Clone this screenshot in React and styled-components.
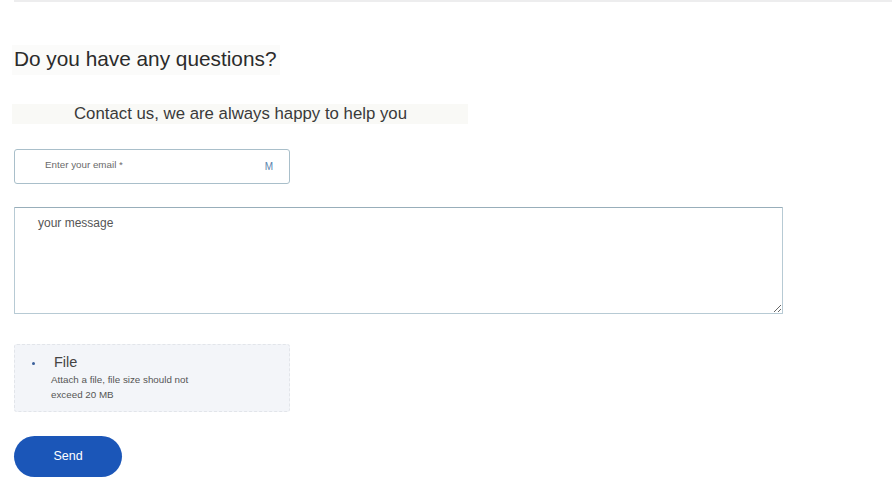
import React from 'react'
import styled, { createGlobalStyle } from 'styled-components'

const GlobalStyle = createGlobalStyle`
  html, body {
    margin: 0;
    padding: 0;
    background: #ffffff;
  }
  body {
    font-family: "Liberation Sans", Arial, sans-serif;
    color: #333;
  }
`;

const Page = styled.main`
  width: 892px;
  min-height: 489px;
  box-sizing: border-box;
  padding-left: 14px;
  display: flex;
  flex-direction: column;
  align-items: flex-start;
`;

const TopRule = styled.div`
  align-self: stretch;
  height: 2px;
  background: #ededee;
`;

const Title = styled.h2`
  margin: 43px 0 0 -2px;
  padding: 2px 4px 4px 2px;
  font-size: 20.8px;
  font-weight: 400;
  line-height: 24px;
  color: #2b2b2b;
  background: #fbfbfa;
`;

const Subtitle = styled.p`
  margin: 29px 0 0 -2px;
  padding: 0 61px 0 62px;
  font-size: 16.8px;
  line-height: 20px;
  color: #3a3a3a;
  background: #f9f9f6;
`;

const Field = styled.label`
  margin-top: 25px;
  width: 276px;
  height: 35px;
  box-sizing: border-box;
  border: 1px solid #a9bfca;
  border-radius: 3px;
  display: flex;
  align-items: center;
  padding: 0 16px 4px 30px;
`;

const EmailInput = styled.input`
  flex: 1;
  border: none;
  outline: none;
  padding: 0;
  background: transparent;
  font-family: "Liberation Sans", Arial, sans-serif;
  font-size: 9.8px;
  color: #333;
  &::placeholder { color: #6a6a6a; }
`;

const FieldIcon = styled.span`
  font-size: 10px;
  color: #5a83ad;
  padding-top: 4px;
`;

const Message = styled.textarea`
  margin-top: 23px;
  width: 769px;
  height: 107px;
  box-sizing: border-box;
  border: 1px solid #b7cad4;
  border-top-color: #98aeba;
  border-radius: 1px;
  padding: 8px 23px;
  font-family: "Liberation Sans", Arial, sans-serif;
  font-size: 12px;
  line-height: 14px;
  color: #333;
  outline: none;
  &::placeholder { color: #555; }
`;

const FileBox = styled.div`
  margin-top: 30px;
  width: 276px;
  height: 68px;
  box-sizing: border-box;
  background: #f3f5f9;
  border: 1px dashed #e2e5ea;
  border-radius: 3px;
  padding: 9px 0 0 17px;
  display: flex;
  gap: 19px;
`;

const Bullet = styled.span`
  width: 3px;
  height: 3px;
  margin-top: 8px;
  border-radius: 50%;
  background: #3a5f9a;
`;

const FileText = styled.div`
  display: flex;
  flex-direction: column;
`;

const FileTitle = styled.span`
  font-size: 14.5px;
  line-height: 16px;
  color: #444;
`;

const FileHint = styled.span`
  margin: 2px 0 0 -3px;
  width: 150px;
  font-size: 9.8px;
  line-height: 15px;
  color: #555;
`;

const SendButton = styled.button`
  margin-top: 24px;
  width: 108px;
  height: 41px;
  border: none;
  border-radius: 21px;
  background: #1b56b8;
  color: #fff;
  font-family: "Liberation Sans", Arial, sans-serif;
  font-size: 12.5px;
  padding: 0 0 2px 0;
  cursor: pointer;
`;

export default function App() {
  return (
    <>
      <GlobalStyle />
      <Page>
        <TopRule />
        <Title>Do you have any questions?</Title>
        <Subtitle>Contact us, we are always happy to help you</Subtitle>
        <Field>
          <EmailInput type="email" placeholder="Enter your email *" />
          <FieldIcon>M</FieldIcon>
        </Field>
        <Message placeholder="your message" />
        <FileBox>
          <Bullet />
          <FileText>
            <FileTitle>File</FileTitle>
            <FileHint>Attach a file, file size should not exceed 20 MB</FileHint>
          </FileText>
        </FileBox>
        <SendButton type="button">Send</SendButton>
      </Page>
    </>
  )
}
